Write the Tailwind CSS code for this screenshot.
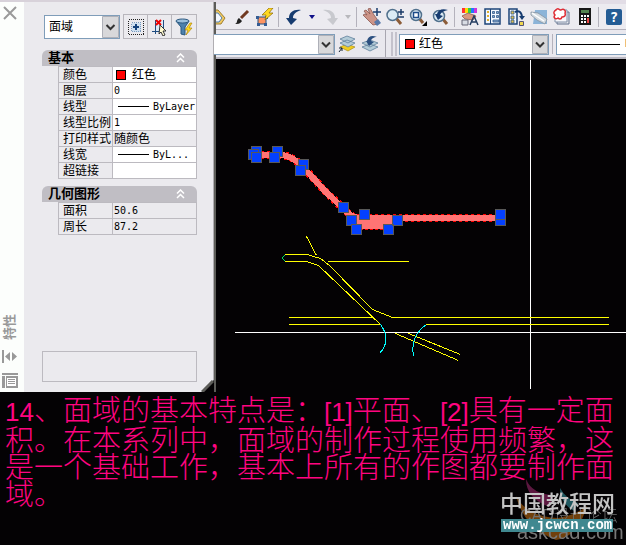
<!DOCTYPE html>
<html lang="zh-CN">
<head>
    <meta charset="UTF-8">
    <meta name="viewport" content="width=device-width, initial-scale=1.0">
    <title>面域</title>
    <script src="https://cdn.jsdelivr.net/npm/@tailwindcss/browser@4"></script>
</head>
<body class="min-h-screen flex flex-col bg-[#040204] text-black text-[12px] leading-[14px] font-['DejaVu_Sans_Mono','Noto_Sans_CJK_SC',sans-serif]">
    <main class="flex bg-[#040204]">
        <!-- Properties palette -->
        <aside class="relative w-[214px] shrink-0 flex bg-[#ebeaee] border-t-2 border-[#d8d2da]">
            <div class="w-6 shrink-0 bg-[#fcfefc] flex flex-col items-center justify-between pt-1 pb-1">
                <button aria-label="关闭" class="mr-1">
                    <svg width="14" height="14" viewBox="0 0 14 14" stroke="#9a9a9a" stroke-width="2"><path d="M1 1L13 13M13 1L1 13"/></svg>
                </button>
                <div class="flex flex-col items-center gap-2.5 mr-1">
                    <span class="text-[13px] font-bold text-[#999] [writing-mode:vertical-rl] [text-orientation:sideways] rotate-180">特性</span>
                    <svg width="16" height="13" viewBox="0 0 16 13" fill="#999"><path d="M0 0h2v13H0zM3 6.500L8 2v9zM10 2l5 4.500L10 11z"/></svg>
                    <svg width="16" height="15" viewBox="0 0 16 15" fill="#999"><path d="M0 0h16v2H0zM0 3h3v12H0zM4 3h12v12H4z"/><path d="M5 5h9v8H5z" fill="#fff"/><path d="M6 6h7v1H6zM6 8h7v1H6zM6 10h7v1H6z"/></svg>
                </div>
            </div>

            <div class="flex-1 flex flex-col pl-[18px] pr-4 pt-3">
                <div class="flex items-center justify-between pl-0.5">
                    <div class="relative">
                        <select aria-label="对象" class="appearance-none w-[76px] h-6 pl-1 bg-white border border-[#7f9db9]">
                            <option>面域</option>
                        </select>
                        <svg class="absolute right-px top-px pointer-events-none" width="17" height="22" viewBox="0 0 17 22"><path d="M.5.5h16v21H.5z" fill="#d8d8da" stroke="#aeb0b8"/><path d="M4.500 9l4 4 4-4" fill="none" stroke="#333" stroke-width="2"/></svg>
                    </div>
                    <div class="flex border border-[#b8b6bc] divide-x divide-[#b8b6bc]">
                        <button aria-label="切换" class="w-6 h-[23px] flex items-center justify-center">
                            <svg width="18" height="18" viewBox="0 0 18 18" shape-rendering="crispEdges"><path d="M1.500 1.500h15v15h-15z" fill="none" stroke="#222" stroke-dasharray="1 1"/><path d="M4.500 4.500h9v9h-9z" fill="#cfe0f0" stroke="#7c9cc0" stroke-dasharray="1 1"/><path d="M9 6v6M6 9h6" stroke="#14427c" stroke-width="2"/></svg>
                        </button>
                        <button aria-label="选择对象" class="w-6 h-[23px] flex items-center justify-center">
                            <svg width="18" height="18" viewBox="0 0 18 18"><path d="M4.500 2v14M1 13.500h12M12.500 2v10" stroke="#1f4c80" fill="none"/><path d="M5 3h7v10H5z" fill="#dceaf8"/><path d="M5 2l5 5M10 2L5 7" stroke="#e00" stroke-width="2"/><path d="M9 7l6 6h-3l2 4-2 1-2-4-2 2z" fill="#fffbd0" stroke="#333"/></svg>
                        </button>
                        <button aria-label="快速选择" class="w-6 h-[23px] flex items-center justify-center">
                            <svg width="18" height="18" viewBox="0 0 18 18"><path d="M1 3l5 6v7l4 1V9l4-6z" fill="#4d81ac" stroke="#2b5880"/><ellipse cx="7.500" cy="3" rx="6.500" ry="2" fill="#9cc0dc" stroke="#2b5880"/><path d="M15 5l-5 7h3l-2 5 6-7h-3l3-5z" fill="#ffdc20" stroke="#a87800" stroke-width=".6"/></svg>
                        </button>
                    </div>
                </div>

                <section class="mt-[11px]">
                    <h2 class="h-4 pl-1.5 pr-3 flex items-center justify-between bg-[#c0bec4] rounded-t-md text-[13px] font-bold">基本
                        <button aria-label="折叠"><svg width="9" height="10" viewBox="0 0 9 10" fill="none" stroke="#fff" stroke-width="1.500"><path d="M1 4.500L4.500 1 8 4.500M1 9l3.500-3.500L8 9"/></svg></button>
                    </h2>
                    <table class="w-[139px] ml-4 table-fixed border-collapse whitespace-nowrap">
                        <tbody>
                            <tr class="h-4"><th class="w-[54px] p-0 pl-1 text-left font-normal border border-[#bcbac0]">颜色</th><td class="p-0 bg-white border border-[#bcbac0]"><span class="flex items-center gap-1.5 pl-[3px]"><i class="size-[10px] bg-[#f00] border border-black"></i>红色</span></td></tr>
                            <tr class="h-4"><th class="p-0 pl-1 text-left font-normal border border-[#bcbac0]">图层</th><td class="p-0 pl-px bg-white border border-[#bcbac0] text-[10px]">0</td></tr>
                            <tr class="h-4"><th class="p-0 pl-1 text-left font-normal border border-[#bcbac0]">线型</th><td class="p-0 bg-white border border-[#bcbac0] text-[10px]"><span class="flex items-center gap-1 pl-[5px]"><i class="w-[31px] h-px bg-black"></i>ByLayer</span></td></tr>
                            <tr class="h-4"><th class="p-0 pl-1 text-left font-normal border border-[#bcbac0]">线型比例</th><td class="p-0 pl-px bg-white border border-[#bcbac0] text-[10px]">1</td></tr>
                            <tr class="h-4"><th class="p-0 pl-1 text-left font-normal border border-[#bcbac0]">打印样式</th><td class="p-0 pl-px border border-[#bcbac0]">随颜色</td></tr>
                            <tr class="h-4"><th class="p-0 pl-1 text-left font-normal border border-[#bcbac0]">线宽</th><td class="p-0 bg-white border border-[#bcbac0] text-[10px]"><span class="flex items-center gap-1 pl-[5px]"><i class="w-[31px] h-px bg-black"></i>ByL...</span></td></tr>
                            <tr class="h-4"><th class="p-0 pl-1 text-left font-normal border border-[#bcbac0]">超链接</th><td class="p-0 bg-white border border-[#bcbac0]"></td></tr>
                        </tbody>
                    </table>
                </section>

                <section class="mt-[7px]">
                    <h2 class="h-4 pl-1.5 pr-3 flex items-center justify-between bg-[#c0bec4] rounded-t-md text-[13px] font-bold">几何图形
                        <button aria-label="折叠"><svg width="9" height="10" viewBox="0 0 9 10" fill="none" stroke="#fff" stroke-width="1.500"><path d="M1 4.500L4.500 1 8 4.500M1 9l3.500-3.500L8 9"/></svg></button>
                    </h2>
                    <table class="w-[139px] ml-4 table-fixed border-collapse">
                        <tbody>
                            <tr class="h-4"><th class="w-[54px] p-0 pl-1 text-left font-normal border border-[#bcbac0]">面积</th><td class="p-0 pl-px border border-[#bcbac0] text-[10px]">50.6</td></tr>
                            <tr class="h-4"><th class="p-0 pl-1 text-left font-normal border border-[#bcbac0]">周长</th><td class="p-0 pl-px border border-[#bcbac0] text-[10px]">87.2</td></tr>
                        </tbody>
                    </table>
                </section>

                <div class="mt-auto mb-2.5 h-[31px] border border-[#bcbac0]"></div>
            </div>
            <div class="w-[3px] shrink-0 bg-[#5c5c58] border-l border-[#b0aeb2]"></div>
            <!-- cut corner -->
            <svg class="absolute right-0 bottom-0" width="13" height="12" viewBox="0 0 13 12"><path d="M13 0v12H1z" fill="#040204"/><path d="M1 12L12 1" stroke="#5c5c58" stroke-width="3"/></svg>
        </aside>

        <div class="flex-1 min-w-0 flex flex-col">
            <!-- Standard toolbar -->
            <div class="h-[30px] shrink-0 pt-px flex items-center overflow-hidden bg-[#ecebf0] border-t-4 border-b border-t-[#e2dde6] border-b-[#b4b2bc] [&>*]:shrink-0">
                <button aria-label="粘贴" class="w-4 h-[18px]"><svg width="12" height="18" viewBox="0 0 12 18"><path d="M0 2h4l7 8-4 6H0z" fill="#f0c860" stroke="#a08030"/><path d="M0 5h4l4 5-3 4H0z" fill="#f4f8ff" stroke="#5080b0"/></svg></button>
                <button aria-label="特性匹配" class="w-[23px] flex justify-center"><svg width="16" height="17" viewBox="0 0 16 17"><path d="M7 9L14 2" stroke="#703820" stroke-width="3"/><path d="M1 15c3-1 1-4 4-6l3 3c-2 3-4 3-7 3z" fill="#222"/></svg></button>
                <button aria-label="块编辑器" class="w-[23px] flex justify-center"><svg width="18" height="18" viewBox="0 0 18 18"><path d="M2 9h8v7H2z" fill="#ff9460" stroke="#245080"/><path d="M0 8h3v3H0zM9 8h3v3H9zM1 15h3v3H1zM8 15h3v3H8z" fill="#345c94"/><path d="M13 0L6 7h4l-1 5 8-7h-4l4-5z" fill="#ffd820" stroke="#8c6800" stroke-width=".7"/></svg></button>
                <i class="w-px h-5 mx-[2px] mr-[3px] bg-[#b4b2bc]"></i>
                <button aria-label="放弃" class="w-6 flex justify-center"><svg width="18" height="18" viewBox="0 0 18 18"><path d="M1 10l5 7 6-6-4-1c0-4 3-6 8-8C9 1 4 4 4 10z" fill="#173c70"/></svg></button>
                <button aria-label="放弃列表" class="w-3 flex justify-center"><svg width="6" height="4" viewBox="0 0 6 4"><path d="M0 0h6L3 4z" fill="#101088"/></svg></button>
                <button aria-label="重做" class="w-[23px] flex justify-center"><svg width="18" height="18" viewBox="0 0 18 18"><path d="M17 10l-5 7-6-6 4-1c0-4-3-6-8-8 7-1 12 2 12 8z" fill="#c8c9ce"/></svg></button>
                <button aria-label="重做列表" class="w-[13px] flex justify-center"><svg width="6" height="4" viewBox="0 0 6 4"><path d="M0 0h6L3 4z" fill="#b8b8bc"/></svg></button>
                <i class="w-px h-5 mx-[2px] mr-[3px] bg-[#b4b2bc]"></i>
                <button aria-label="平移" class="w-[23px] flex justify-center"><svg width="18" height="18" viewBox="0 0 18 18"><path d="M1 3l2-1 4 4-2-5 2-1 4 7 3 4 1 5-5 1-6-6-4-4 2-1 2 1z" fill="#cc9488" stroke="#8c5850" stroke-width=".8"/><path d="M11 14l4-3 3 4-4 3z" fill="#5878a8"/><path d="M14 0v8M10 4h8" stroke="#1a3c6c" stroke-width="1.500"/></svg></button>
                <button aria-label="实时缩放" class="w-[23px] flex justify-center"><svg width="18" height="18" viewBox="0 0 18 18"><path d="M10 10l5 6" stroke="#8c5c38" stroke-width="3"/><circle cx="6.500" cy="7" r="5.500" fill="#dcebf4" stroke="#50708c" stroke-width="1.500"/><path d="M15 1v6M12 4h6M12 9h6" stroke="#1c3c68" stroke-width="1.500"/></svg></button>
                <button aria-label="窗口缩放" class="w-[23px] flex justify-center"><svg width="18" height="18" viewBox="0 0 18 18"><path d="M10 10l4 5" stroke="#8c5c38" stroke-width="3"/><circle cx="7" cy="7" r="5.500" fill="#dcebf4" stroke="#50708c" stroke-width="1.500"/><path d="M4.500 4.500h5v5h-5z" fill="#fff" stroke="#1c4c88" stroke-width="1.500"/><path d="M18 13v5h-5z"/></svg></button>
                <button aria-label="缩放上一个" class="w-[23px] flex justify-center"><svg width="18" height="18" viewBox="0 0 18 18"><path d="M10 10l5 6" stroke="#8c5c38" stroke-width="3"/><circle cx="7" cy="8" r="5.500" fill="#dcebf4" stroke="#50708c" stroke-width="1.500"/><path d="M3 6l3 6 5-4-3-1c1-3 4-4 8-5-6-2-10 0-11 4z" fill="#173c70"/></svg></button>
                <i class="w-px h-5 mx-[2px] mr-[3px] bg-[#b4b2bc]"></i>
                <button aria-label="特性" class="w-[23px] flex justify-center"><svg width="18" height="18" viewBox="0 0 18 18"><path d="M1 0h3v5H1z" fill="#f33"/><path d="M4 0h3v5H4z" fill="#fd0"/><path d="M7 0h3v5H7z" fill="#3c4"/><path d="M10 0h3v5h-3z" fill="#27f"/><path d="M13 0h3v5h-3z" fill="#c3d"/><path d="M1 8l6-3 8 3-3 4-8-1z" fill="#d89880" stroke="#8c5850" stroke-width=".8"/><path d="M1 12h6v5H1z" fill="#d8dce4" stroke="#667"/><path d="M9 17l4-9 4 9M11 14h4" fill="none" stroke="#223c60" stroke-width="1.500"/></svg></button>
                <button aria-label="设计中心" class="w-[23px] flex justify-center"><svg width="18" height="18" viewBox="0 0 18 18"><path d="M1 1h15v15H1z" fill="#f4f8ff" stroke="#1c4478" stroke-width="1.500"/><path d="M6.500 1v15" stroke="#1c4478"/><path d="M3 3h2v2H3zM3 7h2v2H3zM3 11h2v2H3z" fill="#e0b030"/><path d="M8.500 3.500h2v2h-2zM12.500 3.500h2v2h-2zM8.500 7.500h2v2h-2zM12.500 7.500h2v2h-2zM9 12h6v2H9z" fill="#88a8cc" stroke="#30588c" stroke-width=".8"/></svg></button>
                <button aria-label="工具选项板" class="w-[23px] flex justify-center"><svg width="18" height="18" viewBox="0 0 18 18"><path d="M2 1h8v15H2z" fill="#f4f8ff" stroke="#1c4478" stroke-width="1.500"/><path d="M4 3h3v3H4zM4 8h3v3H4zM4 12h3v3H4z" fill="#e0c050" stroke="#30588c" stroke-width=".8"/><path d="M8 4c4-2 7 0 7 6" fill="none" stroke="#173c70" stroke-width="2"/><path d="M12 8h6l-3 4z" fill="#173c70"/><path d="M12.500 13.500h4v4h-4z" fill="#f0d850" stroke="#557"/></svg></button>
                <button aria-label="图纸集" class="w-[23px] flex justify-center"><svg width="18" height="18" viewBox="0 0 18 18"><path d="M5 2h12v14H3z" fill="#8cb4d8"/><path d="M1 4l7 1 9 6-2 5-8-4-6-5z" fill="#d4dce2" stroke="#8492a0" stroke-width=".8"/><path d="M2 5l12 8" stroke="#fff" stroke-width="1.500"/></svg></button>
                <button aria-label="标记集" class="w-[23px] flex justify-center"><svg width="18" height="18" viewBox="0 0 18 18"><path d="M4 4h12v12H4z" fill="#e4e6ec" stroke="#60708c"/><path d="M2 2h12v12H2z" fill="#f8f8fc" stroke="#8090a8"/><path d="M3 2c2-3 3 0 5 0 3-2 5 1 4 3 1 3-1 4-3 4-1 3-3 2-4 1-3 2-5-1-3-3-2-2-1-4 1-5z" fill="#fff" stroke="#e02c34" stroke-width="1.500"/></svg></button>
                <button aria-label="快速计算器" class="w-[23px] flex justify-center"><svg width="14" height="18" viewBox="0 0 14 18"><path d="M1 0h12v17H1z" fill="#181818"/><path d="M3 2h8v3H3z" fill="#548450"/><path d="M3 7h2v2H3zM6 7h2v2H6zM9 7h2v2H9zM3 10h2v2H3zM6 10h2v2H6zM3 13h2v2H3zM6 13h2v2H6z" fill="#fff"/><path d="M9 10h2v5H9z" fill="#e44"/></svg></button>
                <i class="w-px h-5 mx-[2px] mr-[3px] bg-[#b4b2bc]"></i>
                <button aria-label="帮助" class="w-6 h-4 flex justify-center"><span class="w-4 h-4 leading-4 rounded-xs bg-[#245c94] text-white text-[14px] font-bold">?</span></button>
            </div>

            <!-- Layer and object property bars -->
            <div class="h-[29px] shrink-0 pt-px flex items-center overflow-hidden bg-[#e9e8ee] border-b-2 border-[#b8b6c0] [&>*]:shrink-0">
                <div class="relative w-[121px]">
                    <select aria-label="图层" class="appearance-none block w-full h-[21px] bg-white border border-l-0 border-[#7f9db9]"><option></option></select>
                    <svg class="absolute right-px top-px pointer-events-none" width="16" height="19" viewBox="0 0 16 19"><path d="M.5.5h15v18H.5z" fill="#d8d8da" stroke="#aeb0b8"/><path d="M4 7.500l4 4 4-4" fill="none" stroke="#333" stroke-width="2"/></svg>
                </div>
                <button aria-label="将对象的图层置为当前" class="w-[23px] flex justify-center"><svg width="18" height="18" viewBox="0 0 18 18"><path d="M2 12l7-3 8 3-7 4z" fill="#f0cc20" stroke="#98800c" stroke-width=".6"/><path d="M2 8l7-3 8 3-7 4zM2 4l7-3 8 3-7 4z" fill="#b4ccd8" stroke="#60809c" stroke-width=".8"/><path d="M1 17l3-4M1 13h3v3" fill="none" stroke="#123" /></svg></button>
                <button aria-label="上一个图层" class="w-[23px] flex justify-center"><svg width="18" height="18" viewBox="0 0 18 18"><path d="M1 12l8-3 8 3-8 4zM1 8l8-3 8 3-8 4z" fill="#b4ccd8" stroke="#60809c" stroke-width=".8"/><path d="M5 6l3 5 5-4-3-1c0-2 3-4 6-4-5-2-9-1-10 4z" fill="#2c5080"/></svg></button>
                <i class="w-px h-7 ml-[4px] bg-[#a8a6b0]"></i>
                <i class="w-[2px] h-6 ml-[5px] bg-[#c4c2cc]"></i>
                <i class="w-[2px] h-6 ml-[2px] bg-[#c4c2cc]"></i>
                <div class="relative w-[150px] ml-[2px]">
                    <select aria-label="颜色" class="appearance-none block w-full h-[21px] pl-[19px] bg-white border border-[#7f9db9]"><option>红色</option></select>
                    <i class="absolute left-[6px] top-[5px] size-[10px] bg-[#f00] border border-black pointer-events-none"></i>
                    <svg class="absolute right-px top-px pointer-events-none" width="16" height="19" viewBox="0 0 16 19"><path d="M.5.5h15v18H.5z" fill="#d8d8da" stroke="#aeb0b8"/><path d="M4 7.500l4 4 4-4" fill="none" stroke="#333" stroke-width="2"/></svg>
                </div>
                <i class="w-px h-5 mx-[3px] bg-[#b4b2bc]"></i>
                <div class="relative w-[150px]">
                    <select aria-label="线型" class="appearance-none block w-full h-[21px] pl-[68px] bg-white border border-[#7f9db9] text-[10px]"><option>ByLayer</option></select>
                    <i class="absolute left-[4px] top-[10px] w-[60px] h-px bg-black pointer-events-none"></i>
                </div>
            </div>

            <!-- Drawing area -->
            <svg class="w-full" viewBox="214 59 412 333" shape-rendering="crispEdges" fill="none">
                <path d="M530.500 60V389M235 332.500H626" stroke="#fff"/>
                <path d="M255 154.500H278Q292 155 303 167L325 191L349 214Q354 218 361 218H500" stroke="#f00" stroke-width="8" stroke-dasharray="3 3"/>
                <path d="M255 154.500H278Q292 155 303 167L325 191L349 214Q354 218 361 218H500" stroke="#ff7474" stroke-width="6"/>
                <path d="M350 215H394V229H360z" fill="#ff7474"/>
                <path d="M360 229.500H390" stroke="#f00" stroke-dasharray="3 2"/>
                <g fill="#0440ff" stroke="#585858">
                    <path d="M251.500 146.500h10v10h-10z"/><path d="M248.500 149.500h10v10h-10z"/><path d="M251.500 152.500h10v10h-10z"/>
                    <path d="M272.500 146.500h10v10h-10z"/><path d="M269.500 152.500h10v10h-10z"/>
                    <path d="M298.500 159.500h10v10h-10z"/><path d="M295.500 165.500h10v10h-10z"/>
                    <path d="M338.500 202.500h10v10h-10zM346.500 215.500h10v10h-10zM359.500 209.500h10v10h-10z"/>
                    <path d="M351.500 224.500h10v10h-10zM383.500 224.500h10v10h-10zM392.500 215.500h10v10h-10z"/>
                    <path d="M495.500 215.500h10v10h-10z"/><path d="M495.500 209.500h10v10h-10z"/>
                </g>
                <g stroke="#ff0">
                    <path d="M306.500 236.500L316.500 255.500M285 254.500H307L320.500 258.500L329.500 265.500L372.500 309.500L392.500 317.500H609"/>
                    <path d="M285 261.500H306L318.500 265.500L381.500 325.500M328 261.500H409M289 317.500H372M289 324.500H381M426 324.500H609"/>
                    <path d="M395.500 333.500L458.500 360.500M408.500 333.500L460.500 354.500"/>
                </g>
                <path d="M285.500 254.500Q280 258 285.500 261.500" stroke="#00e060"/>
                <path d="M380.500 324.500Q392 340 379.500 353.500M426.500 324.500Q410 336 413.500 356.500" stroke="#0ff"/>
            </svg>
        </div>
    </main>

    <p class="pl-[5px] pt-[3px] text-[29px] leading-[27px] text-[#ff0480] whitespace-nowrap font-light font-['Noto_Sans_CJK_SC',sans-serif]"><span class="text-[26px] leading-none font-['Liberation_Sans',sans-serif]">14</span>、面域的基本特点是：<span class="text-[26px] leading-none font-['Liberation_Sans',sans-serif]">[1]</span>平面、<span class="text-[26px] leading-none font-['Liberation_Sans',sans-serif]">[2]</span>具有一定面<br>积。在本系列中，面域的制作过程使用频繁，这<br>是一个基础工作，基本上所有的作图都要制作面<br>域。</p>

    <!-- Watermark -->
    <footer class="fixed right-0 bottom-0 w-[126px] h-[66px] whitespace-nowrap font-['Liberation_Sans','Noto_Sans_CJK_SC',sans-serif]">
        <svg class="absolute inset-0" width="126" height="66" viewBox="0 0 126 66">
            <path d="M26 0Q32 15 53 16L50 28Q26 20 26 0z" fill="#5c1840"/>
            <path d="M60 9Q66 20 78 24L74 32Q60 24 60 9z" fill="#205860"/>
            <path d="M16 17Q27 38 58 39Q76 36 87 27Q78 58 56 61Q24 49 16 17z" fill="#70400c"/>
        </svg>
        <span class="absolute left-[20px] top-[29px] text-[16px] leading-4 text-[#707070] font-light">CAD设计论坛</span>
        <span class="absolute left-[17px] top-[43px] text-[20px] leading-5 text-[#777]">askcad.com</span>
        <span class="absolute left-0 top-[13px] text-[23px] leading-6 text-[#c4c4c4] font-medium">中国教程网</span>
        <a href="#" class="absolute left-[1px] top-[40px] w-[112px] h-[13px] pl-0.5 bg-[#408890] text-white text-[14px] leading-[12px] font-bold font-['Liberation_Mono',monospace]">www.jcwcn.com</a>
    </footer>
</body>
</html>
